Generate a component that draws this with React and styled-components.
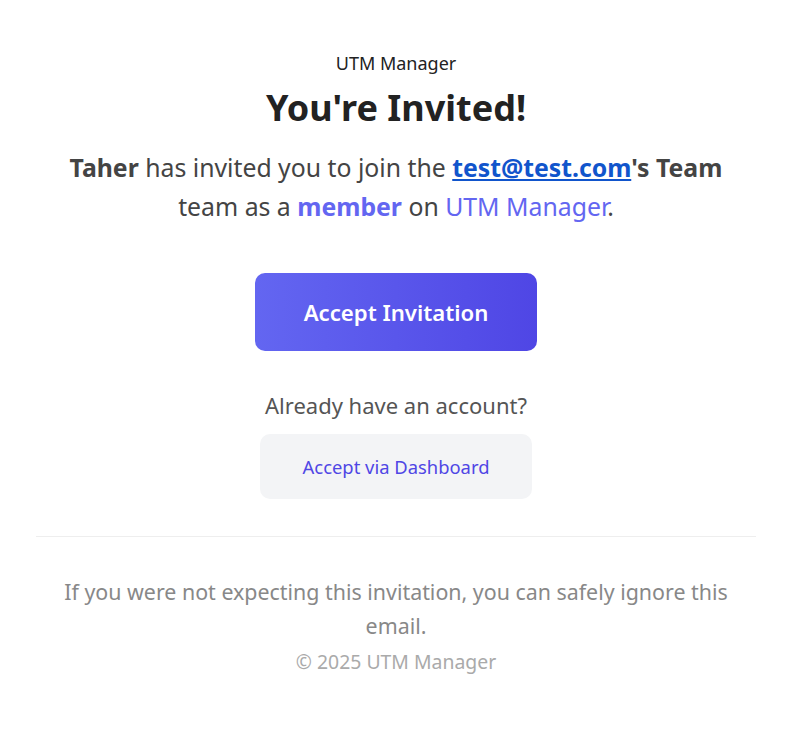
import React from "react";
import styled, { createGlobalStyle } from "styled-components";

const GlobalStyle = createGlobalStyle`
    body {
        margin: 0;
        background: #ffffff;
        font-family: "Noto Sans", "Open Sans", sans-serif;
    }
`;

const Container = styled.div`
    max-width: 720px;
    margin: 0 auto;
    padding: 40px 36px;
    text-align: center;
    color: #222;
`;

const Brand = styled.div`
    font-size: 18px;
    line-height: 26px;
    color: #222;
    margin-top: 10px;
`;

const Title = styled.h1`
    font-size: 36px;
    line-height: 44px;
    font-weight: 700;
    color: #222;
    margin: 10px 0 18px;
`;

const Message = styled.p`
    font-size: 24.8px;
    line-height: 39px;
    color: #444;
    margin: 0 0 47px;
    padding: 0 20px;

    strong {
        font-weight: 700;
    }
`;

const EmailLink = styled.a`
    color: #1155cc;
    font-weight: 700;
    text-decoration: underline;
`;

const Accent = styled.span`
    color: #6366f1;
    font-weight: ${(p) => (p.$bold ? 700 : 400)};
`;

const PrimaryButton = styled.a`
    display: inline-flex;
    align-items: center;
    justify-content: center;
    width: 282px;
    height: 78px;
    border-radius: 10px;
    background: linear-gradient(90deg, #6366f1, #4f46e5);
    color: #fff;
    font-size: 22.2px;
    font-weight: 600;
    text-decoration: none;
`;

const Already = styled.p`
    font-size: 22px;
    line-height: 30px;
    color: #555;
    margin: 39px 0 14px;
`;

const SecondaryButton = styled.a`
    display: inline-flex;
    align-items: center;
    justify-content: center;
    width: 272px;
    height: 65px;
    border-radius: 10px;
    background: #f3f4f6;
    color: #4f46e5;
    font-size: 18.4px;
    text-decoration: none;
`;

const Divider = styled.hr`
    border: none;
    border-top: 1px solid #eeeeee;
    margin: 37px 0 38px;
`;

const Footer = styled.p`
    font-size: 21.4px;
    line-height: 34px;
    color: #888;
    margin: 0;
`;

const Copyright = styled.p`
    font-size: 19.4px;
    line-height: 30px;
    color: #aaa;
    margin: 4px 0 0;
`;

const App = () => {
    return (
        <>
            <GlobalStyle />
            <Container>
                <Brand>UTM Manager</Brand>
                <Title>You're Invited!</Title>
                <Message>
                    <strong>Taher</strong> has invited you to join the{" "}
                    <EmailLink href="#">test@test.com</EmailLink>
                    <strong>'s Team</strong> team as a <Accent $bold>member</Accent> on{" "}
                    <Accent>UTM Manager</Accent>.
                </Message>
                <PrimaryButton href="#">Accept Invitation</PrimaryButton>
                <Already>Already have an account?</Already>
                <SecondaryButton href="#">Accept via Dashboard</SecondaryButton>
                <Divider />
                <Footer>If you were not expecting this invitation, you can safely ignore this email.</Footer>
                <Copyright>© 2025 UTM Manager</Copyright>
            </Container>
        </>
    );
};

export default App;
